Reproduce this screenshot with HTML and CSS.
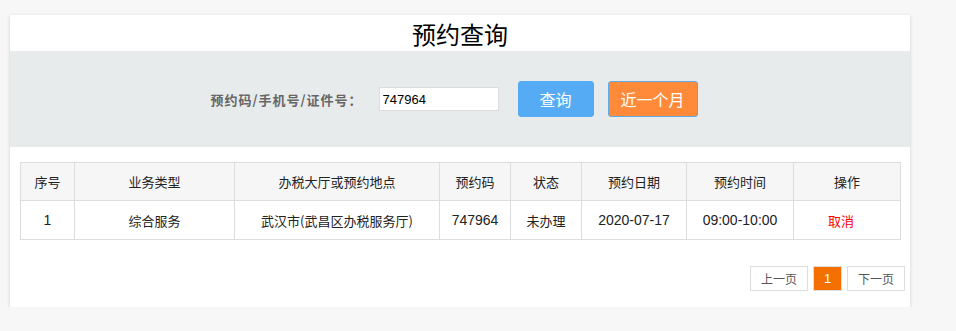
FILE: index.html
```html
<!DOCTYPE html>
<html lang="zh-CN">
<head>
<meta charset="utf-8">
<title>预约查询</title>
<link rel="stylesheet" href="styles.css">
</head>
<body>
<div class="card">
  <div class="title">预约查询</div>
  <div class="search">
    <span class="label">预约码/手机号/证件号：</span>
    <input class="field" type="text" value="747964">
    <button class="btn btn-blue">查询</button>
    <button class="btn btn-orange">近一个月</button>
  </div>
  <table class="grid">
    <colgroup>
      <col class="c1"><col class="c2"><col class="c3"><col class="c4"><col class="c5"><col class="c6"><col class="c7"><col class="c8">
    </colgroup>
    <thead>
      <tr><th>序号</th><th>业务类型</th><th>办税大厅或预约地点</th><th>预约码</th><th>状态</th><th>预约日期</th><th>预约时间</th><th>操作</th></tr>
    </thead>
    <tbody>
      <tr><td>1</td><td class="cn">综合服务</td><td class="cn">武汉市(武昌区办税服务厅)</td><td>747964</td><td class="cn">未办理</td><td>2020-07-17</td><td>09:00-10:00</td><td class="cn"><a class="cancel">取消</a></td></tr>
    </tbody>
  </table>
  <div class="pager">
    <span class="pg">上一页</span>
    <span class="pg pg-on">1</span>
    <span class="pg">下一页</span>
  </div>
</div>
</body>
</html>
```
FILE: styles.css
```css
html, body { margin: 0; padding: 0; }
body {
  background: #f7f7f7;
  padding: 15px 10px 0;
  font-family: "Liberation Sans", "Noto Sans CJK SC", sans-serif;
  color: #333;
}
.card {
  width: 900px;
  height: 292px;
  background: #fff;
  box-shadow: 0 1px 4px rgba(0,0,0,0.16);
  display: flex;
  flex-direction: column;
}
.title {
  height: 36px;
  line-height: 38px;
  text-align: center;
  font-size: 24px;
  color: #000;
  font-family: "Noto Sans CJK SC", sans-serif;
}
.search {
  height: 96px;
  background: #e8ebec;
  display: flex;
  align-items: center;
  justify-content: center;
  padding-right: 12px;
}
.label {
  font-size: 13px;
  font-weight: bold;
  color: #666;
  letter-spacing: 1px;
  margin-right: 16px;
  font-family: "Noto Sans CJK SC", sans-serif;
}
.field {
  box-sizing: border-box;
  width: 120px;
  height: 24px;
  border: 1px solid #dcdcdc;
  padding: 0 3px;
  font-size: 13px;
  font-family: "Liberation Sans", sans-serif;
  color: #000;
  margin: 0 19px 0 0;
  outline: none;
}
.btn {
  box-sizing: border-box;
  height: 36px;
  border-radius: 3px;
  color: #fff;
  font-size: 16px;
  font-family: "Noto Sans CJK SC", sans-serif;
  padding: 0;
  cursor: pointer;
}
.btn-blue {
  width: 76px;
  background: #55acf5;
  border: 1px solid #55acf5;
  margin-right: 14px;
}
.btn-orange {
  width: 90px;
  background: #fe8a3a;
  border: 1px solid #5fa9e6;
}
.grid {
  margin: 15px 0 0 10px;
  width: 880px;
  border-collapse: collapse;
  table-layout: fixed;
}
.c1 { width: 54px; }
.c2 { width: 160px; }
.c3 { width: 205px; }
.c4 { width: 71px; }
.c5 { width: 71px; }
.c6 { width: 105px; }
.c7 { width: 107px; }
.c8 { width: 107px; }
.grid th, .grid td {
  border: 1px solid #dddddd;
  text-align: center;
  padding: 0;
  color: #222;
}
.grid th {
  height: 37px;
  background: #f6f6f6;
  font-weight: normal;
  font-size: 13px;
  font-family: "Noto Sans CJK SC", sans-serif;
}
.grid td {
  height: 38px;
  font-size: 14px;
}
.grid td.cn { font-size: 13px; font-family: "Noto Sans CJK SC", sans-serif; }
.cancel { color: #ff0000; padding-right: 12px; }
.pager {
  display: flex;
  justify-content: flex-end;
  gap: 5px;
  margin: 26px 5px 0 0;
}
.pg {
  box-sizing: border-box;
  height: 25px;
  width: 58px;
  border: 1px solid #dddddd;
  font-size: 12px;
  color: #555;
  display: flex;
  align-items: center;
  justify-content: center;
  font-family: "Noto Sans CJK SC", sans-serif;
}
.pg-on {
  width: 29px;
  background: #f37000;
  color: #fff;
  font-family: "Liberation Sans", sans-serif;
  font-size: 13px;
}
```
